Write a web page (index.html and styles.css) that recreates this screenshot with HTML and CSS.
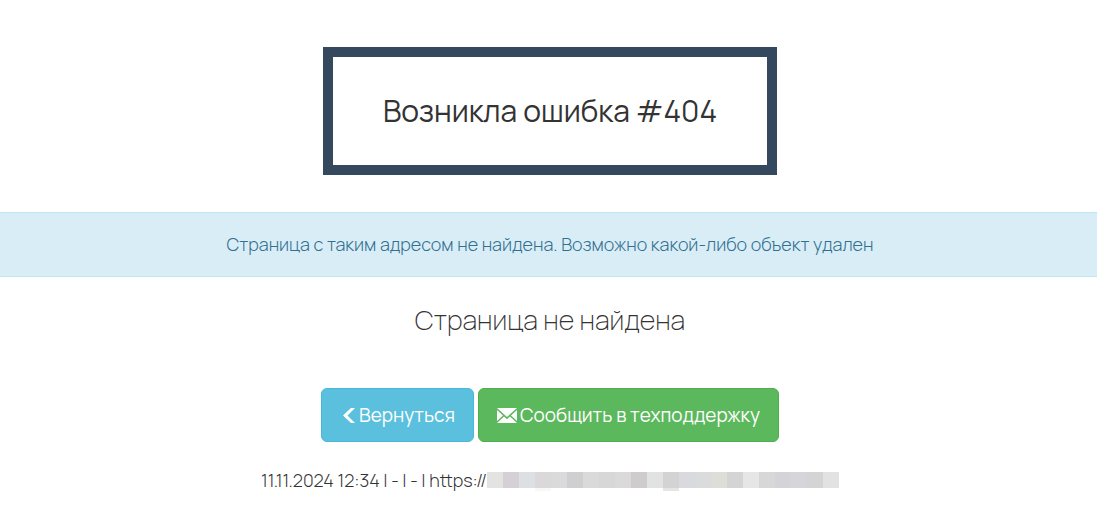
FILE: index.html
```html
<!DOCTYPE html>
<html lang="ru">
<head>
<meta charset="utf-8">
<meta name="viewport" content="width=device-width, initial-scale=1">
<title>Страница не найдена</title>
<link rel="stylesheet" href="styles.css">
</head>
<body>
<main class="error-page">
  <h1 class="error-title">Возникла ошибка #404</h1>
  <p class="alert">Страница с таким адресом не найдена. Возможно какой-либо объект удален</p>
  <h2 class="subtitle">Страница не найдена</h2>
  <div class="actions">
    <button type="button" class="btn btn-info">
      <svg class="icon icon-back" viewBox="0 0 14 15" aria-hidden="true"><path d="M9 0h4L5.500 7.500l7.500 7.500H9L1 7.500z"/></svg>
      <span>Вернуться</span>
    </button>
    <button type="button" class="btn btn-success">
      <svg class="icon icon-mail" viewBox="0 0 20 15" aria-hidden="true"><path d="M0 0h20L10 9zM0 2l6 5.500L0 13zM20 2v11l-6-5.500zM0 15l7-6.500 3 2.700 3-2.700 7 6.500z"/></svg>
      <span>Сообщить в техподдержку</span>
    </button>
  </div>
  <div class="details">
    <span>11.11.2024 12:34 | - | - | https://</span>
    <span class="mosaic" aria-hidden="true">
      <i class="tile t1"></i><i class="tile t2"></i><i class="tile t3"></i><i class="tile t4 tail-light"></i><i class="tile t5"></i><i class="tile t6"></i><i class="tile t5"></i><i class="tile t7"></i><i class="tile t5"></i><i class="tile t8"></i><i class="tile t9"></i><i class="tile t10 tail"></i><i class="tile t11"></i><i class="tile t12"></i><i class="tile t13"></i><i class="tile t14"></i><i class="tile t15"></i><i class="tile t7"></i><i class="tile t16"></i><i class="tile t17"></i><i class="tile t14"></i><i class="tile t9"></i>
    </span>
  </div>
</main>
</body>
</html>
```
FILE: styles.css
```css
* { box-sizing: border-box; }

body {
  margin: 0;
  overflow-x: hidden;
  background: #fff;
  color: #333;
  font-family: Manrope, Inter, "Open Sans", sans-serif;
  font-size: 18px;
  font-weight: 300;
  line-height: 24px;
}

.error-page {
  display: flex;
  flex-direction: column;
  align-items: center;
  width: calc(100% + 3px);
  padding: 47px 0 24px;
  text-align: center;
}

.error-title {
  margin: 0 0 37px;
  padding: 36px 50px;
  border: 10px solid #34495e;
  font-size: 30px;
  font-weight: 400;
  line-height: 36px;
}

.alert {
  width: 100%;
  margin: 0 0 25px;
  padding: 19px 16px 20px;
  border: 1px solid #bce8f1;
  border-width: 1px 0;
  background: #d9edf7;
  color: #31708f;
}

.subtitle {
  margin: 0 0 50px;
  font-size: 27px;
  font-weight: 200;
  line-height: 36px;
}

.actions {
  display: flex;
  flex-wrap: wrap;
  justify-content: center;
  gap: 4px;
  margin-bottom: 26px;
}

.btn {
  display: flex;
  align-items: center;
  gap: 3px;
  padding: 14px 18px;
  border: 1px solid;
  border-radius: 6px;
  color: #fff;
  font-family: inherit;
  font-size: 19px;
  font-weight: 400;
  line-height: 24px;
  cursor: pointer;
}

.btn-info { background: #5bc0de; border-color: #46b8da; padding-left: 20px; }
.btn-success { background: #5cb85c; border-color: #4cae4c; }

.icon { fill: #fff; }
.icon-back { width: 14px; height: 15px; }
.icon-mail { width: 20px; height: 15px; }

.details {
  display: flex;
  flex-wrap: wrap;
  justify-content: center;
  align-items: center;
}

.mosaic { display: flex; }
.tile { width: 16px; height: 16px; }
.tail { box-shadow: 0 3px #e5e5e5; }
.tail-light { box-shadow: 0 3px #f8f8f8; }

.t1 { background: #e3e3e1; }
.t2 { background: #d5d0d5; }
.t3 { background: #dde0e2; }
.t4 { background: #dad8d8; }
.t5 { background: #dadada; }
.t6 { background: #cecfd1; }
.t7 { background: #d7d7d8; }
.t8 { background: #cfcdcc; }
.t9 { background: #e0e3e2; }
.t10 { background: #d2d3d2; }
.t11 { background: #d8dadd; }
.t12 { background: #d9dcdb; }
.t13 { background: #deded9; }
.t14 { background: #d4d4d4; }
.t15 { background: #e6e6e6; }
.t16 { background: #d2d4d8; }
.t17 { background: #d6d6da; }
```
